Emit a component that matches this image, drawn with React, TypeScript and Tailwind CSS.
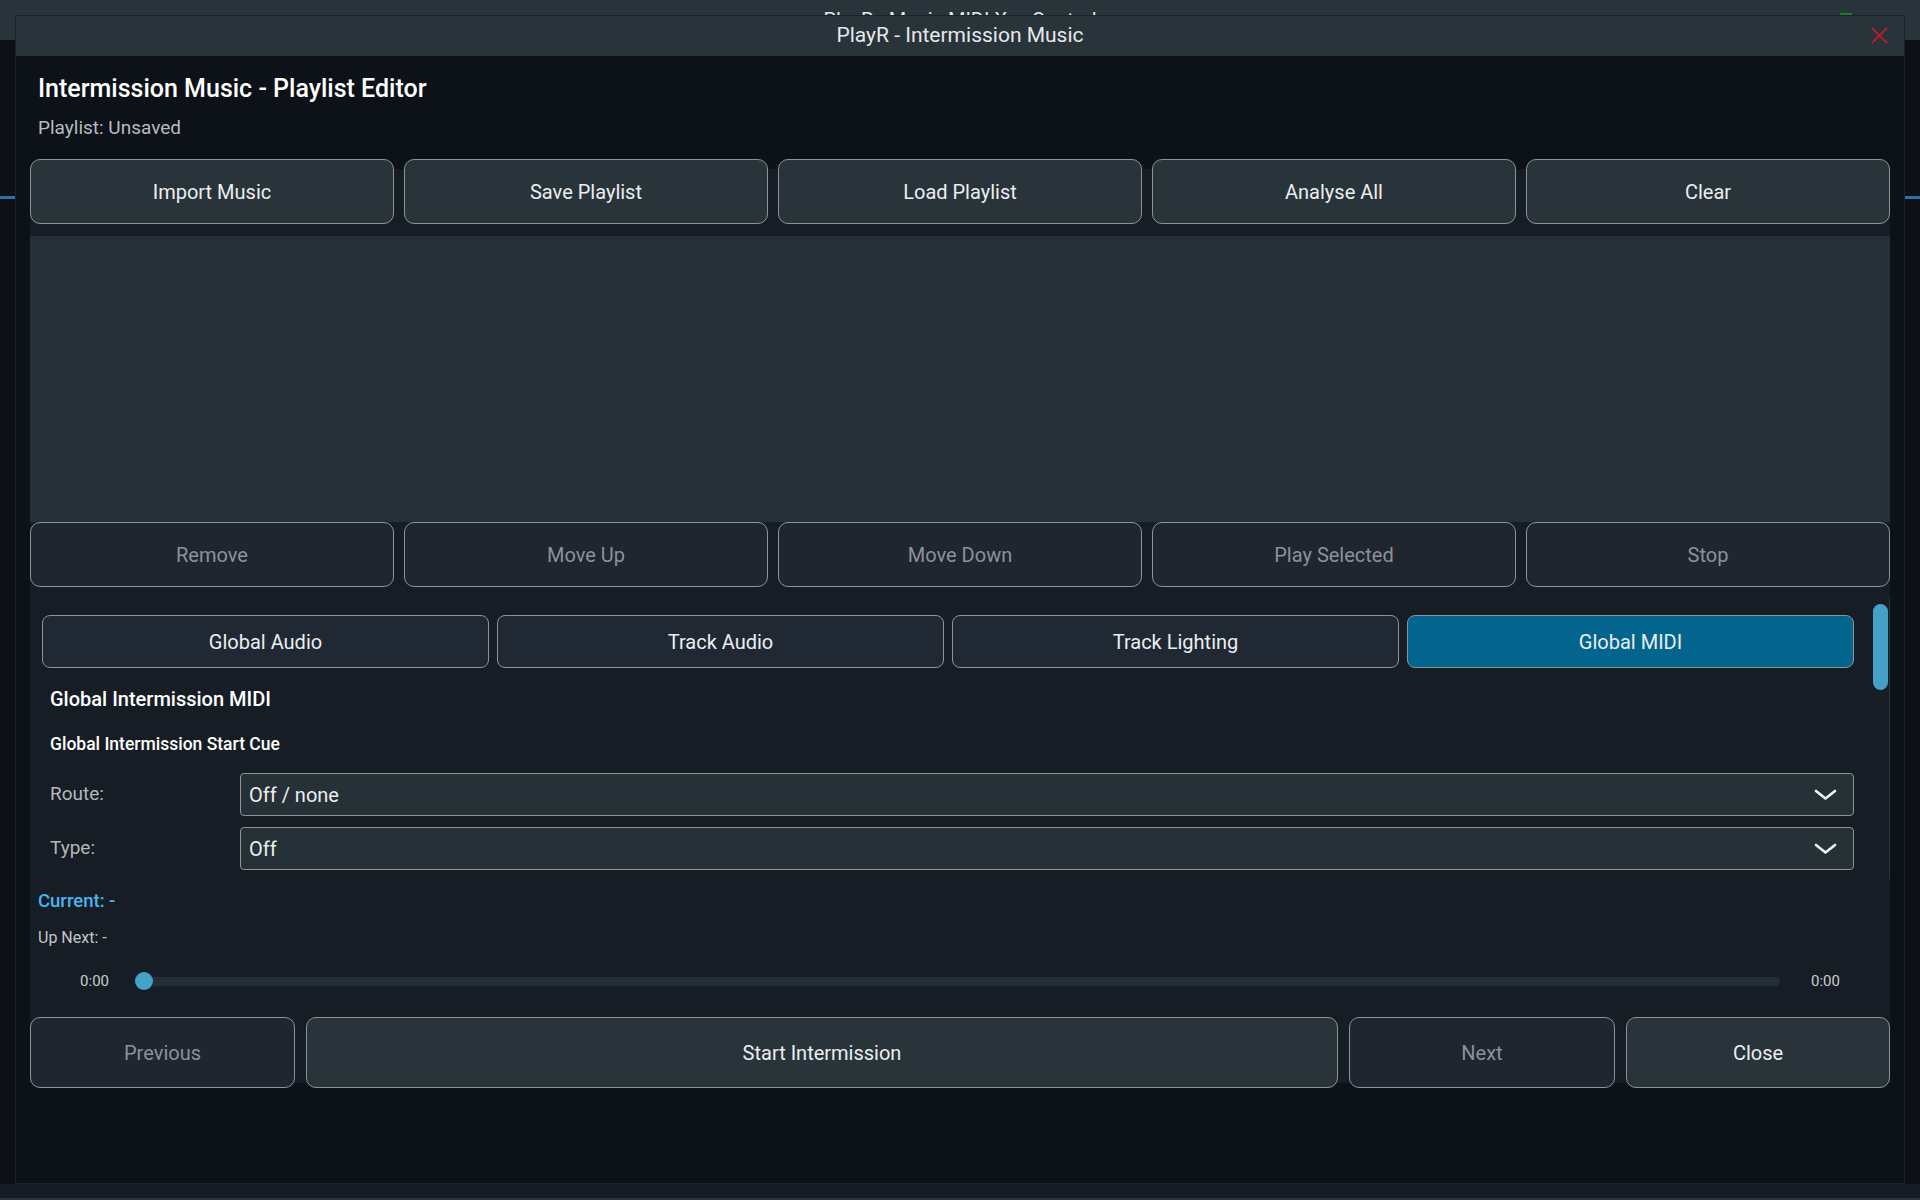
import React from 'react';

const font = { fontFamily: 'Roboto, "Noto Sans", sans-serif' };

const Btn: React.FC<{ label: string; disabled?: boolean; className?: string }> = ({ label, disabled, className = '' }) => (
  <button
    className={`flex items-center justify-center rounded-[10px] border-[1.5px] border-[#8c9499] text-[20px] ${
      disabled ? 'bg-[#1f2630] text-[#8b9298]' : 'bg-[#29333a] text-[#eceef0]'
    } ${className}`}
  >
    {label}
  </button>
);

const Chevron = () => (
  <svg width="23" height="12" viewBox="0 0 23 12" fill="none" stroke="#f2f4f5" strokeWidth="2.6" strokeLinecap="round" strokeLinejoin="round">
    <polyline points="2,2 11.5,9.5 21,2" />
  </svg>
);

const Combo: React.FC<{ label: string; value: string; className?: string }> = ({ label, value, className = '' }) => (
  <div className={`flex items-center ${className}`}>
    <div className="w-[198px] pl-[8px] text-[19px] text-[#b3b8bc]">{label}</div>
    <div className="flex h-[43px] flex-1 items-center justify-between rounded-[4px] border-[1.5px] border-[#8c9499] bg-[#263037] pl-[8px] pr-[16px] text-[20px] text-[#eceef0]">
      <span>{value}</span>
      <Chevron />
    </div>
  </div>
);

export default function App() {
  const tabs = ['Global Audio', 'Track Audio', 'Track Lighting', 'Global MIDI'];

  return (
    <div className="relative h-[1200px] w-[1920px] overflow-hidden bg-[#0d1117]" style={font}>
      {/* parent window behind */}
      <div className="h-[40px] bg-[#29333a]">
        <div className="flex h-[15px] justify-center overflow-hidden">
          <span className="mt-[8px] text-[20px] leading-[24px] text-[#e6e8ea]">PlayR - Music MIDI Xxx Control</span>
        </div>
      </div>
      <div className="absolute left-0 top-[196px] h-[3px] w-[15px] bg-[#2f6ea8]" />
      <div className="absolute right-0 top-[196px] h-[3px] w-[15px] bg-[#2f6ea8]" />
      <div className="absolute left-[1840px] top-[13px] h-[3px] w-[12px] bg-[#1d7a2c]" />
      <div className="absolute bottom-0 left-0 h-[16px] w-full border-b-2 border-[#2a333b] bg-[#161c24]" />

      {/* dialog */}
      <div className="absolute left-[15px] top-[15px] flex h-[1169px] w-[1890px] flex-col border border-[#1b2229] bg-[#0d1118]">
        <div className="relative flex h-[40px] shrink-0 items-center justify-center bg-[#29333a] text-[21px] text-[#e6e8ea]">
          PlayR - Intermission Music
          <span className="absolute right-[16px] top-[11px] text-[#b3202b]">
            <svg width="17" height="17" viewBox="0 0 17 17" stroke="currentColor" strokeWidth="1.8">
              <line x1="1" y1="1" x2="16" y2="16" />
              <line x1="16" y1="1" x2="1" y2="16" />
            </svg>
          </span>
        </div>

        <div className="px-[14px]">
          <div className="pl-[8px] pt-[17px]">
            <div className="h-[32px] text-[25px] font-medium leading-[32px] text-white">
              Intermission Music - Playlist Editor
            </div>
            <div className="mt-[11px] h-[24px] text-[19px] leading-[24px] text-[#b8bcc0]">Playlist: Unsaved</div>
          </div>

          <div className="mt-[29px] flex flex-col bg-[#171d25]">
            <div className="-mt-[10px] grid h-[65px] grid-cols-5 gap-[10px]">
              {['Import Music', 'Save Playlist', 'Load Playlist', 'Analyse All', 'Clear'].map((l) => (
                <Btn key={l} label={l} />
              ))}
            </div>

            <div className="mt-[12px] h-[286px] bg-[#263037]" />

            <div className="grid h-[65px] grid-cols-5 gap-[10px]">
              {['Remove', 'Move Up', 'Move Down', 'Play Selected', 'Stop'].map((l) => (
                <Btn key={l} label={l} disabled />
              ))}
            </div>

            {/* scroll area */}
            <div className="relative ml-[7px] mt-[10px] border-r border-[#2a323a] pb-[9px] pl-[5px] pr-[35px] pt-[18px]">
              <div className="absolute right-[1px] top-[7px] h-[86px] w-[15px] rounded-full bg-[#45a0c8]" />
              <div className="grid h-[53px] grid-cols-4 gap-[8px]">
                {tabs.map((t) => (
                  <button
                    key={t}
                    className={`flex items-center justify-center rounded-[8px] border-[1.5px] border-[#8c9499] text-[20px] text-[#eceef0] ${
                      t === 'Global MIDI' ? 'bg-[#03658e]' : 'bg-[#202833]'
                    }`}
                  >
                    {t}
                  </button>
                ))}
              </div>
              <div className="mt-[19px] pl-[8px] text-[20px] font-medium leading-[24px] text-white">Global Intermission MIDI</div>
              <div className="mt-[22px] pl-[8px] text-[17.5px] font-medium leading-[22px] text-white">
                Global Intermission Start Cue
              </div>
              <Combo label="Route:" value="Off / none" className="mt-[18px]" />
              <Combo label="Type:" value="Off" className="mt-[11px]" />
            </div>

            <div className="mt-[10px] pl-[8px] text-[18.5px] font-medium leading-[24px] text-[#4ab4f0]">Current: -</div>
            <div className="mt-[15px] pl-[8px] text-[16px] leading-[20px] text-[#c2c6ca]">Up Next: -</div>

            <div className="mt-[23px] flex h-[20px] items-center px-[48px] text-[15px] text-[#c8ccd0]">
              <span className="w-[31px] text-right">0:00</span>
              <div className="relative ml-[26px] h-[9px] flex-1 rounded-full bg-[#242e36]">
                <div className="absolute -top-[5px] left-0 h-[18px] w-[18px] rounded-full bg-[#44a3cc]" />
              </div>
              <span className="ml-[31px] w-[31px]">0:00</span>
            </div>

            <div className="-mb-[5px] mt-[26px] flex h-[71px] gap-[11px]">
              <Btn label="Previous" disabled className="w-[265px]" />
              <Btn label="Start Intermission" className="flex-1" />
              <Btn label="Next" disabled className="w-[266px]" />
              <Btn label="Close" className="w-[264px]" />
            </div>
          </div>
        </div>
      </div>
    </div>
  );
}
